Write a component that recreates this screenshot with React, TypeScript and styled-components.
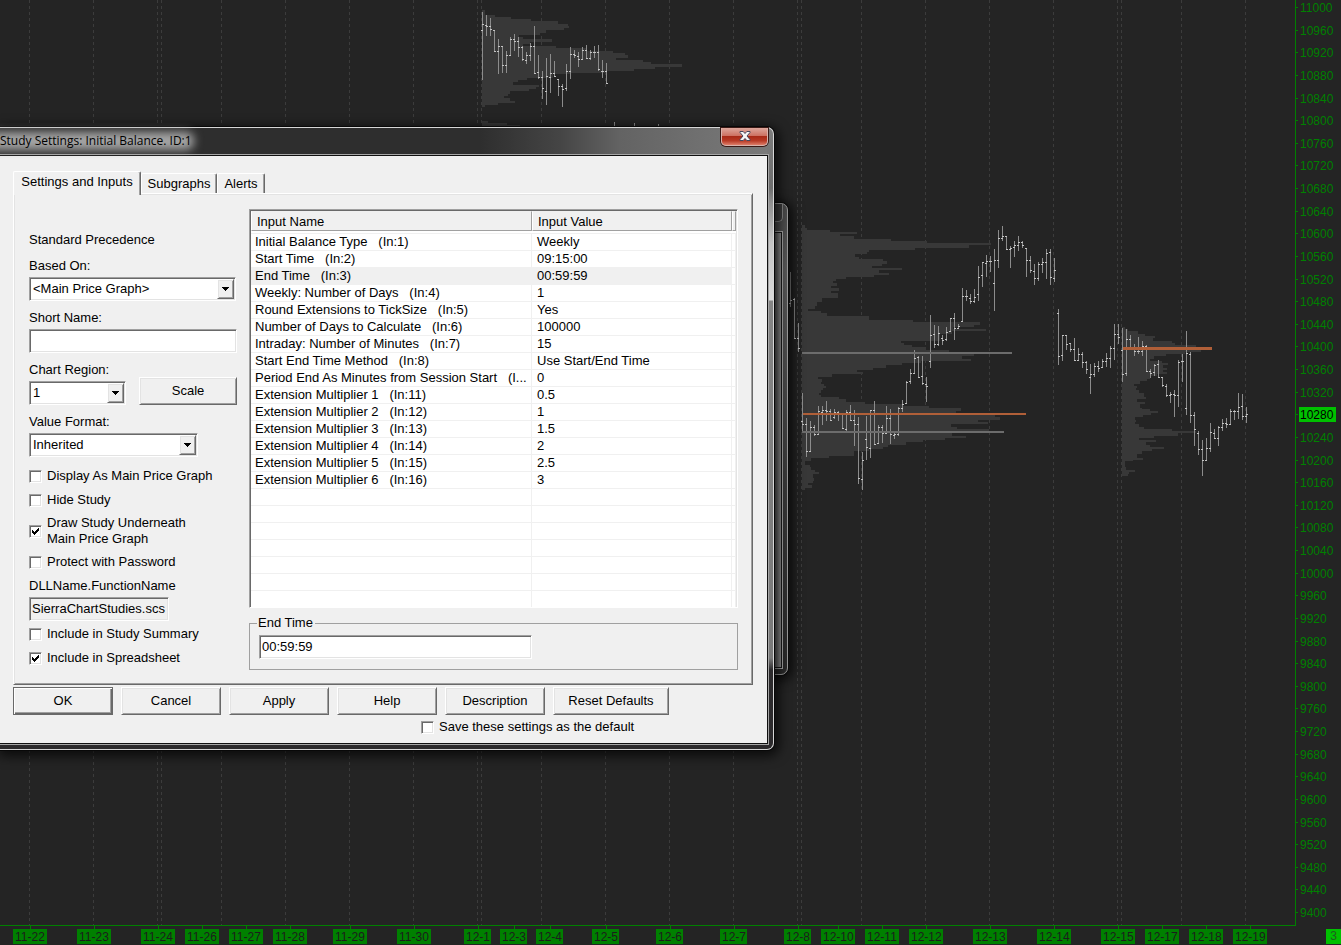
import React from "react";
import styled, { createGlobalStyle, css } from "styled-components";

/* ------------------------------------------------------------------ */
/* Chart data. Drawing data is stored at three units per screen pixel.  */
/* ------------------------------------------------------------------ */

const UNITS = 3;

type Bar = [x: number, high: number, low: number, open: number, close: number];
type Step = [y: number, extent: number];

interface BarGroup {
  originX: number;
  originY: number;
  bars: Bar[];
}

interface Profile {
  originX: number;
  originY: number;
  base: number;
  end: number;
  steps: Step[];
}

const barGroups: BarGroup[] = [
  {
    originX: 470,
    originY: 0,
    bars: [
      [37, 36, 240, 91, 73], [49, 45, 110, 76, 79], [61, 54, 110, 79, 88], [73, 90, 156, 91, 154],
      [85, 117, 222, 154, 139], [97, 138, 219, 139, 196], [109, 153, 219, 196, 166], [121, 111, 168, 166, 118],
      [133, 102, 153, 118, 124], [145, 111, 171, 124, 142], [157, 138, 183, 142, 178], [169, 156, 192, 181, 166],
      [181, 129, 183, 166, 139], [193, 78, 222, 139, 220], [205, 165, 237, 217, 232], [217, 213, 297, 232, 265],
      [229, 174, 315, 274, 229], [241, 162, 279, 232, 220], [253, 183, 231, 220, 229], [265, 237, 288, 238, 259],
      [277, 252, 321, 259, 268], [289, 192, 273, 265, 214], [301, 141, 237, 214, 163], [313, 150, 174, 163, 166],
      [325, 156, 201, 169, 178], [337, 141, 180, 178, 151], [349, 135, 178, 151, 175], [361, 150, 180, 175, 157],
      [373, 138, 174, 157, 157], [385, 135, 213, 157, 208], [397, 180, 234, 214, 214], [409, 189, 252, 214, 250],
      [433, 366, 390, 385, 385], [493, 369, 390, 385, 385], [565, 372, 390, 385, 385],
    ],
  },
  {
    originX: 780,
    originY: 210,
    bars: [
      [31, 186, 291, 280, 271], [43, 265, 387, 268, 385], [55, 339, 426, 385, 415], [67, 549, 663, 634, 643],
      [79, 624, 741, 643, 724], [91, 633, 726, 724, 652], [103, 645, 678, 652, 673], [115, 588, 675, 673, 604],
      [127, 588, 645, 607, 601], [139, 573, 633, 601, 604], [151, 597, 633, 604, 631], [163, 597, 627, 622, 607],
      [175, 603, 633, 607, 613], [187, 612, 657, 613, 655], [199, 600, 663, 658, 607], [211, 585, 633, 607, 631],
      [223, 600, 708, 631, 643], [235, 621, 822, 643, 805], [247, 726, 840, 808, 751], [259, 618, 750, 688, 712],
      [271, 600, 744, 715, 601], [283, 573, 705, 601, 703], [295, 645, 703, 700, 652], [307, 645, 699, 652, 670],
      [319, 588, 672, 670, 625], [331, 597, 702, 625, 673], [343, 663, 687, 676, 673], [355, 591, 678, 673, 595],
      [367, 570, 606, 595, 583], [379, 513, 582, 580, 517], [391, 477, 522, 514, 490], [403, 420, 492, 490, 445],
      [415, 438, 504, 442, 502], [427, 438, 525, 499, 520], [439, 501, 576, 523, 529], [451, 315, 474, 454, 376],
      [463, 345, 414, 373, 403], [475, 348, 408, 403, 370], [487, 375, 405, 385, 391], [499, 351, 394, 388, 367],
      [511, 324, 366, 364, 325], [523, 309, 390, 325, 355], [535, 342, 357, 355, 349], [547, 234, 336, 334, 259],
      [559, 240, 273, 259, 259], [571, 252, 282, 265, 274], [583, 237, 279, 274, 262], [595, 168, 273, 253, 202],
      [607, 156, 231, 196, 157], [619, 135, 201, 160, 154], [631, 138, 186, 154, 154], [643, 117, 303, 220, 151],
      [655, 60, 174, 151, 85], [667, 48, 93, 85, 80], [679, 78, 120, 80, 118], [691, 108, 174, 118, 115],
      [703, 93, 141, 112, 106], [715, 78, 123, 106, 97], [727, 93, 114, 97, 106], [739, 114, 201, 115, 151],
      [751, 138, 189, 151, 181], [763, 162, 225, 184, 205], [775, 156, 213, 205, 163],
    ],
  },
  {
    originX: 1040,
    originY: 220,
    bars: [
      [7, 114, 159, 133, 127], [19, 87, 177, 127, 100], [31, 87, 195, 97, 172], [43, 114, 186, 175, 151],
      [55, 267, 435, 280, 409], [67, 345, 423, 406, 346], [79, 345, 390, 346, 373], [91, 369, 396, 370, 388],
      [103, 354, 423, 388, 421], [115, 384, 423, 421, 403], [127, 396, 444, 403, 427], [139, 423, 462, 427, 448],
      [151, 432, 522, 472, 463], [163, 429, 471, 463, 439], [175, 423, 456, 439, 445], [187, 417, 444, 442, 424],
      [199, 399, 441, 424, 415], [211, 378, 444, 415, 385], [223, 312, 420, 385, 343], [235, 312, 372, 343, 352],
      [247, 324, 486, 391, 463], [259, 327, 468, 460, 358], [271, 345, 384, 358, 382], [283, 372, 408, 382, 394],
      [295, 351, 402, 394, 394], [307, 363, 408, 394, 379], [319, 375, 456, 379, 454], [331, 447, 474, 454, 460],
      [343, 432, 468, 457, 436], [355, 420, 474, 433, 472], [367, 471, 501, 472, 496], [379, 492, 531, 499, 526],
      [391, 516, 549, 526, 523], [403, 510, 591, 523, 526], [415, 420, 561, 526, 427], [427, 402, 486, 424, 424],
      [439, 333, 585, 565, 400], [451, 396, 609, 403, 586], [463, 576, 678, 586, 628], [475, 633, 705, 640, 688],
      [487, 660, 768, 688, 721], [499, 654, 723, 721, 685], [511, 609, 696, 685, 637], [523, 627, 657, 640, 655],
      [535, 618, 678, 655, 622], [547, 597, 633, 622, 610], [559, 594, 624, 610, 613], [571, 567, 615, 613, 574],
      [583, 570, 600, 574, 574], [595, 519, 597, 574, 562], [607, 522, 600, 559, 589], [619, 561, 609, 589, 583],
    ],
  },
];

const profiles: Profile[] = [
  {
    originX: 470, originY: 0, base: 36, end: 321,
    steps: [
      [30, 45], [45, 75], [51, 123], [57, 183], [63, 264], [72, 294], [78, 297], [84, 282], [90, 228], [99, 210],
      [105, 147], [111, 160], [117, 246], [126, 180], [132, 160], [138, 258], [144, 350], [153, 429], [159, 465],
      [165, 474], [174, 438], [180, 519], [186, 543], [192, 636], [201, 555], [207, 492], [213, 405], [219, 300],
      [222, 250], [234, 171], [240, 144], [246, 129], [255, 207], [261, 198], [267, 177], [273, 120], [282, 114],
      [288, 102], [294, 120], [303, 135], [309, 84], [315, 45],
    ],
  },
  { originX: 470, originY: 0, base: 36, end: 390, steps: [[363, 54], [369, 111], [375, 150]] },
  {
    originX: 780, originY: 210, base: 66, end: 840,
    steps: [
      [45, 75], [54, 81], [60, 150], [66, 231], [72, 180], [78, 222], [87, 333], [93, 441], [99, 633], [105, 567],
      [114, 405], [120, 267], [126, 261], [132, 225], [141, 237], [147, 309], [153, 321], [162, 306], [168, 276],
      [174, 366], [180, 297], [189, 327], [195, 282], [201, 198], [207, 168], [213, 159], [219, 171], [228, 153],
      [234, 177], [243, 153], [249, 174], [264, 126], [276, 111], [288, 105], [297, 84], [303, 123], [309, 141],
      [318, 267], [330, 399], [336, 600], [345, 582], [351, 520], [357, 618], [363, 516], [372, 480], [393, 363],
      [399, 372], [405, 396], [411, 440], [420, 507], [432, 582], [438, 546], [447, 573], [453, 423], [459, 366],
      [465, 318], [474, 279], [480, 231], [486, 249], [492, 156], [501, 114], [507, 126], [516, 123], [522, 132],
      [528, 138], [534, 129], [540, 123], [549, 117], [555, 123], [561, 177], [567, 198], [576, 255], [582, 366],
      [588, 447], [594, 543], [603, 528], [609, 600], [615, 645], [621, 660], [630, 594], [636, 624], [642, 513],
      [651, 531], [657, 628], [669, 516], [678, 558], [684, 495], [690, 429], [696, 378], [705, 324], [711, 309],
      [717, 267], [723, 222], [738, 147], [744, 93], [753, 75], [765, 90], [771, 93], [780, 105], [786, 117],
      [792, 99], [804, 102], [813, 99], [819, 84], [825, 96], [834, 75],
    ],
  },
  {
    originX: 1040, originY: 220, base: 246, end: 768,
    steps: [
      [321, 255], [327, 264], [333, 294], [342, 315], [348, 345], [354, 339], [363, 396], [369, 405], [375, 468],
      [381, 510], [390, 483], [396, 435], [402, 378], [408, 342], [417, 330], [423, 366], [429, 384], [435, 369],
      [444, 381], [450, 369], [456, 381], [462, 351], [468, 330], [477, 321], [483, 300], [492, 282], [498, 291],
      [504, 288], [510, 297], [519, 312], [531, 318], [537, 291], [546, 315], [552, 300], [564, 306], [567, 330],
      [573, 354], [579, 333], [585, 309], [591, 285], [600, 288], [606, 285], [612, 297], [621, 312], [627, 396],
      [633, 468], [639, 414], [648, 342], [654, 297], [660, 348], [666, 318], [675, 330], [681, 372], [687, 336],
      [693, 306], [702, 291], [714, 309], [720, 279], [723, 255], [741, 258], [750, 285], [756, 267], [762, 264],
    ],
  },
];

const gridXs = [
  29, 93, 157, 161, 221, 285, 349, 413, 477, 481, 541, 605, 669, 733, 797, 801, 861, 925, 989, 1053, 1117, 1121, 1181,
  1245,
];

const dates: [string, number][] = [
  ["11-22", 30], ["11-23", 94], ["11-24", 158], ["11-26", 202], ["11-27", 246], ["11-28", 290], ["11-29", 350],
  ["11-30", 414], ["12-1", 478], ["12-3", 514], ["12-4", 550], ["12-5", 606], ["12-6", 670], ["12-7", 734],
  ["12-8", 798], ["12-10", 838], ["12-11", 882], ["12-12", 926], ["12-13", 990], ["12-14", 1054], ["12-15", 1118],
  ["12-17", 1162], ["12-18", 1206], ["12-19", 1250],
];

const prices = Array.from({ length: 41 }, (_, i) => 11000 - i * 40);
const priceY = (price: number) => Math.round(7 + ((11000 - price) / 1600) * 905);

const toPx = (v: number) => Math.floor(v / UNITS);

const stemPath = barGroups
  .map((g) =>
    g.bars
      .map(([x, high, low]) => {
        const px = g.originX + toPx(x);
        return `M${px} ${g.originY + toPx(high)}h1V${g.originY + toPx(low)}h-1z`;
      })
      .join("")
  )
  .join("");

const tickPath = barGroups
  .map((g) =>
    g.bars
      .map(([x, , , open, close]) => {
        const px = g.originX + toPx(x);
        return `M${px - 1} ${g.originY + toPx(open)}h2v1h-2zM${px} ${g.originY + toPx(close)}h2v1h-2z`;
      })
      .join("")
  )
  .join("");

const profilePath = (p: Profile) => {
  const left = p.originX + toPx(p.base);
  const start = `M${left} ${p.originY + toPx(p.steps[0][0])}`;
  const body = p.steps
    .map(([, extent], i) => {
      const next = i + 1 < p.steps.length ? p.steps[i + 1][0] : p.end;
      return `H${p.originX + toPx(extent)}V${p.originY + toPx(next)}`;
    })
    .join("");
  return `${start}${body}H${left}z`;
};

/* ------------------------------------------------------------------ */
/* Chart                                                               */
/* ------------------------------------------------------------------ */

const GlobalStyle = createGlobalStyle`
  *, *::before, *::after { box-sizing: border-box; }
  body {
    margin: 0;
    background: #242424;
    font-family: "Liberation Sans", Arial, sans-serif;
    font-size: 13px;
    line-height: 16px;
    color: #000;
  }
`;

const Workspace = styled.main`
  position: relative;
  display: flex;
  flex-direction: column;
  min-height: 100vh;
  overflow: hidden;
  background: #242424;
`;

const ChartRow = styled.div`
  flex: 1;
  display: flex;
  min-height: 925px;
`;

const Plot = styled.svg`
  flex: 1;
  min-width: 0;
  display: block;
`;

const PriceScale = styled.svg`
  flex: none;
  width: 46px;
  display: block;
  border-left: 1px solid #008000;
`;

const TimeRow = styled.div`
  display: flex;
  justify-content: space-between;
  align-items: flex-end;
  height: 20px;
`;

const TimeScale = styled.svg`
  flex: 1;
  min-width: 0;
  height: 20px;
  display: block;
`;

const AxisText = styled.text<{ $color?: string }>`
  font-family: "Liberation Sans", Arial, sans-serif;
  font-size: 12px;
  fill: ${(p) => p.$color ?? "#008000"};
`;

const ChartNumber = styled.span`
  width: 15px;
  height: 15px;
  margin-bottom: 1px;
  background: #00c000;
  color: #1f5c1f;
  font-size: 12px;
  line-height: 15px;
  text-align: center;
`;

function Chart() {
  return (
    <>
      <ChartRow>
        <Plot role="img" aria-label="Price chart with weekly volume profiles">
          {gridXs.map((x) => (
            <line key={x} x1={x + 0.5} x2={x + 0.5} y1={0} y2={925} stroke="#3c3c3c" strokeDasharray="3 3" />
          ))}
          {profiles.map((p, i) => (
            <path key={i} d={profilePath(p)} fill="#383838" />
          ))}
          <path d={stemPath} fill="#8c8c8c" />
          <path d={tickPath} fill="#c4c4c4" />
          <rect x={802} y={352} width={210} height={2} fill="#6c6c6c" />
          <rect x={802} y={431} width={202} height={2} fill="#6c6c6c" />
          <rect x={803} y={413} width={223} height={2} fill="#b05f38" />
          <rect x={1123} y={347} width={89} height={3} fill="#b05f38" />
        </Plot>
        <PriceScale role="img" aria-label="Price scale">
          {prices.map((price) => {
            const y = priceY(price);
            const current = price === 10280;
            return (
              <g key={price}>
                <rect x={0} y={y} width={2} height={1} fill="#008000" />
                {current && <rect x={3} y={y - 7} width={37} height={15} fill="#00c000" />}
                <AxisText x={4} y={y + 5} $color={current ? "#000" : undefined}>
                  {price}
                </AxisText>
              </g>
            );
          })}
        </PriceScale>
      </ChartRow>
      <TimeRow>
        <TimeScale role="img" aria-label="Time scale">
          <rect x={0} y={0} width={1296} height={1} fill="#008000" />
          {dates.map(([label, x]) => {
            const w = label.length === 5 ? 34 : 27;
            const left = x - Math.round(w / 2);
            return (
              <g key={label}>
                <rect x={x} y={0} width={1} height={4} fill="#008000" />
                <rect x={left} y={4} width={w} height={15} fill="#008000" />
                <AxisText x={left + 2} y={16} $color="#1c1c1c">
                  {label}
                </AxisText>
              </g>
            );
          })}
        </TimeScale>
        <ChartNumber>3</ChartNumber>
      </TimeRow>
    </>
  );
}

/* ------------------------------------------------------------------ */
/* Dialog parts                                                        */
/* ------------------------------------------------------------------ */

const sunken = css`
  border: 1px solid;
  border-color: #a0a0a0 #fff #fff #a0a0a0;
  box-shadow: inset 1px 1px 0 #696969, inset -1px -1px 0 #e3e3e3;
`;

const raised = css`
  border: 1px solid;
  border-color: #fff #696969 #696969 #fff;
  box-shadow: inset 1px 1px 0 #e3e3e3, inset -1px -1px 0 #a0a0a0;
`;

const RearWindow = styled.div`
  position: absolute;
  left: 600px;
  top: 203px;
  width: 188px;
  height: 472px;
  padding: 27px 4px 5px;
  border: 1px solid #9c9c9c;
  border-radius: 0 7px 7px 0;
  background: linear-gradient(#4a4a4a, #5a5a5a 14%, #3a3a3a 60%, #2a2a2a);
  box-shadow: 0 0 0 1px #0c0c0c, 2px 2px 12px 3px rgba(0, 0, 0, 0.7);
`;

const RearCaption = styled.div`
  position: absolute;
  right: 4px;
  top: 0;
  width: 60px;
  height: 18px;
  border: 1px solid #888;
  border-top: 0;
  border-radius: 0 0 5px 5px;
  background: #3c3c3c;
`;

const RearClient = styled.div`
  height: 100%;
  border: 1px solid #a8a8a8;
  outline: 1px solid #1a1a1a;
  outline-offset: -2px;
  background: linear-gradient(90deg, #5c5c5c 168px, #9c9c9c 176px);
`;

const Dialog = styled.section`
  position: absolute;
  left: 0;
  top: 127px;
  width: 774px;
  padding: 0 5px 5px 0;
  border: 1px solid #d6d6d6;
  border-left: 0;
  border-radius: 0 7px 7px 0;
  background:
    linear-gradient(#7c7c7c, #6e6e6e 60px, #909090 75px, #c4c4c4 115px, #dadada 172px, #858585 173px, #7a7a7a 530px, #2c2a2c 542px)
      right / 6px 100% no-repeat,
    linear-gradient(90deg, #2e2e2e, #2e2e2e 480px, #454545 560px, #636363 620px, #707070 700px, #7a7a7a) top / 100% 40px
      no-repeat,
    #2c2a2c;
  box-shadow: 0 0 0 1px #080808, 2px 3px 12px 3px rgba(0, 0, 0, 0.7);
`;

const TitleBar = styled.header`
  display: flex;
  justify-content: space-between;
  align-items: flex-start;
  height: 27px;
`;

const Title = styled.h1`
  position: relative;
  margin: 0;
  padding-top: 4px;
  font-family: "Open Sans", "Segoe UI", sans-serif;
  font-size: 12px;
  font-weight: 400;
  line-height: 18px;
  white-space: nowrap;
  isolation: isolate;

  &::before {
    content: "";
    position: absolute;
    z-index: -1;
    inset: 4px -2px 0 -12px;
    border-radius: 8px;
    background: #a6a6a6;
    filter: blur(5px);
  }
`;

const CloseButton = styled.button`
  display: flex;
  align-items: center;
  justify-content: center;
  width: 47px;
  height: 18px;
  padding: 0 0 1px;
  border: 1px solid #d9b3ac;
  border-top: 0;
  border-radius: 0 0 5px 5px;
  background: linear-gradient(#dea79c, #cd7263 45%, #a82a17 50%, #b83a26 75%, #dd7d68);
  box-shadow: 0 0 0 1px #3a1a16;
`;

const Client = styled.div`
  padding: 15px 14px 7px 13px;
  border: 1px solid #101010;
  border-left: 0;
  background: #f0f0f0;
  box-shadow: 0 0 0 1px #a6a6a6;
`;

const Tabs = styled.div`
  position: relative;
  display: flex;
  align-items: flex-end;
  height: 22px;
`;

const Tab = styled.button<{ $active?: boolean; $w: number }>`
  width: ${(p) => p.$w}px;
  height: ${(p) => (p.$active ? 24 : 20)}px;
  margin-bottom: ${(p) => (p.$active ? -2 : 0)}px;
  padding: 0 0 ${(p) => (p.$active ? 3 : 0)}px;
  border: 1px solid;
  border-color: #fff #696969 transparent #fff;
  border-bottom: 0;
  border-radius: 2px 2px 0 0;
  background: #f0f0f0;
  box-shadow: inset -1px 0 0 #a0a0a0;
  font: inherit;
  color: #000;
  white-space: nowrap;
  text-align: center;
`;

const Panel = styled.div`
  display: grid;
  grid-template-columns: 208px 1fr;
  gap: 13px;
  padding: 15px 14px 14px;
  border: 1px solid;
  border-color: #fff #696969 #696969 #fff;
  box-shadow: inset 1px 1px 0 #e3e3e3, inset -1px -1px 0 #a0a0a0;
`;

const Options = styled.div`
  display: flex;
  flex-direction: column;
  align-items: flex-start;
  padding: 22px 0 0 1px;
  line-height: 18px;
`;

const Caption = styled.p`
  margin: 0 0 8px;
`;

const Field = styled.div`
  display: flex;
  flex-direction: column;
  gap: 2px;
  margin-bottom: 8px;
`;

const FieldRow = styled.div`
  display: flex;
  align-items: flex-end;
  gap: 13px;
  margin-bottom: 8px;

  ${Field} {
    margin-bottom: 0;
  }
`;

const CheckGroup = styled.div`
  display: flex;
  flex-direction: column;
  gap: 6px;
  padding-top: 2px;

  ${Field} {
    margin-bottom: -2px;
  }
`;

const TextBox = styled.input<{ $w: number; $flat?: boolean }>`
  width: ${(p) => p.$w}px;
  height: 24px;
  padding: 0 2px 1px;
  ${sunken}
  border-radius: 0;
  background: ${(p) => (p.$flat ? "#f0f0f0" : "#fff")};
  font: inherit;
  color: #000;
  outline: 0;
`;

const SelectFrame = styled.div<{ $w: number }>`
  display: grid;
  width: ${(p) => p.$w}px;
  height: 24px;
  padding: 1px;
  ${sunken}
  background: #fff;
`;

const NativeSelect = styled.select`
  grid-area: 1 / 1;
  appearance: none;
  padding: 0 18px 0 2px;
  border: 0;
  background: transparent;
  font: inherit;
  color: #000;
  outline: 0;
`;

const SelectArrow = styled.span`
  grid-area: 1 / 1;
  justify-self: end;
  display: flex;
  align-items: center;
  justify-content: center;
  width: 17px;
  ${raised}
  background: #f0f0f0;
  pointer-events: none;
`;

const CheckLabel = styled.label`
  display: flex;
  align-items: center;
  gap: 5px;
  min-height: 18px;
  line-height: 16px;
`;

const CheckBoxFrame = styled.span`
  display: grid;
  flex: none;
  width: 13px;
  height: 13px;
`;

const NativeCheck = styled.input`
  grid-area: 1 / 1;
  appearance: none;
  width: 13px;
  height: 13px;
  margin: 0;
  ${sunken}
  background: #fff;
`;

const Tick = styled.svg`
  grid-area: 1 / 1;
  width: 13px;
  height: 13px;
  visibility: hidden;
  pointer-events: none;

  ${NativeCheck}:checked + & {
    visibility: visible;
  }
`;

const PushButton = styled.button<{ $w?: number; $default?: boolean }>`
  width: ${(p) => p.$w ?? 100}px;
  height: 28px;
  padding: 0 0 1px;
  ${raised}
  ${(p) =>
    p.$default &&
    css`
      border-color: #696969;
      box-shadow: inset 1px 1px 0 #fff, inset -1px -1px 0 #696969, inset -2px -2px 0 #a0a0a0;
    `}
  background: #f0f0f0;
  font: inherit;
  line-height: 16px;
  color: #000;
`;

const Inputs = styled.div`
  display: flex;
  flex-direction: column;
  gap: 7px;
  min-width: 0;
`;

const ListView = styled.div`
  height: 399px;
  padding: 1px;
  ${sunken}
  background: #fff;
  overflow: hidden;
`;

const ListTable = styled.table`
  width: 100%;
  table-layout: fixed;
  border-collapse: separate;
  border-spacing: 0;
`;

const HeadCell = styled.th`
  height: 19px;
  padding: 2px 0 0 5px;
  border: 1px solid;
  border-color: #f0f0f0 #a0a0a0 #a0a0a0 #fff;
  background: #f0f0f0;
  font-weight: 400;
  line-height: 16px;
  text-align: left;
`;

const Spacer = styled.td`
  height: 3px;
  padding: 0;
  border-bottom: 1px solid #f0f0f0;
`;

const Cell = styled.td<{ $selected?: boolean }>`
  height: 17px;
  padding: 0 4px;
  border-right: 1px solid #f0f0f0;
  border-bottom: 1px solid #f0f0f0;
  background: ${(p) => (p.$selected ? "#f0f0f0" : "#fff")};
  overflow: hidden;
  white-space: pre;

  & + & {
    padding-left: 5px;
  }
`;

const Group = styled.fieldset`
  min-width: 0;
  height: 55px;
  margin: 0;
  padding: 4px 9px 0;
  border: 1px solid #a0a0a0;
`;

const Legend = styled.legend`
  margin: 0 0 0 -2px;
  padding: 0 2px 0 1px;
`;

const Actions = styled.div`
  display: flex;
  gap: 8px;
  padding-top: 2px;
`;

const SaveDefault = styled.div`
  display: flex;
  padding: 3px 0 0 408px;
`;

/* ------------------------------------------------------------------ */
/* Dialog                                                              */
/* ------------------------------------------------------------------ */

const rows: [string, string][] = [
  ["Initial Balance Type   (In:1)", "Weekly"],
  ["Start Time   (In:2)", "09:15:00"],
  ["End Time   (In:3)", "00:59:59"],
  ["Weekly: Number of Days   (In:4)", "1"],
  ["Round Extensions to TickSize   (In:5)", "Yes"],
  ["Number of Days to Calculate   (In:6)", "100000"],
  ["Intraday: Number of Minutes   (In:7)", "15"],
  ["Start End Time Method   (In:8)", "Use Start/End Time"],
  ["Period End As Minutes from Session Start   (I...", "0"],
  ["Extension Multiplier 1   (In:11)", "0.5"],
  ["Extension Multiplier 2   (In:12)", "1"],
  ["Extension Multiplier 3   (In:13)", "1.5"],
  ["Extension Multiplier 4   (In:14)", "2"],
  ["Extension Multiplier 5   (In:15)", "2.5"],
  ["Extension Multiplier 6   (In:16)", "3"],
];

const EMPTY_ROWS = 7;

function Select({ id, width, value }: { id: string; width: number; value: string }) {
  return (
    <SelectFrame $w={width}>
      <NativeSelect id={id} defaultValue={value}>
        <option value={value}>{value}</option>
      </NativeSelect>
      <SelectArrow aria-hidden="true">
        <svg width="7" height="4" viewBox="0 0 7 4">
          <path d="M0 0h7v1h-1v1h-1v1h-1v1h-1v-1h-1v-1h-1v-1h-1z" fill="#000" />
        </svg>
      </SelectArrow>
    </SelectFrame>
  );
}

function Check({ checked = false, children }: { checked?: boolean; children: React.ReactNode }) {
  return (
    <CheckLabel>
      <CheckBoxFrame>
        <NativeCheck type="checkbox" defaultChecked={checked} />
        <Tick viewBox="0 0 13 13" aria-hidden="true">
          <path d="M3 5v3h1v1h1v1h1v-1h1v-1h1v-1h1v-1h1v-3h-1v1h-1v1h-1v1h-1v1h-1v-1h-1v-1z" fill="#000" />
        </Tick>
      </CheckBoxFrame>
      <span>{children}</span>
    </CheckLabel>
  );
}

function StudyDialog() {
  return (
    <Dialog role="dialog" aria-labelledby="dialog-title">
      <TitleBar>
        <Title id="dialog-title">Study Settings: Initial Balance. ID:1</Title>
        <CloseButton type="button" aria-label="Close">
          <svg width="12" height="10" viewBox="0 0 12 10">
            <path
              d="M1 .5h3.2L6 2.5 7.8.5H11v1L8 5l3 3.5v1H7.8L6 7.500 4.200 9.500H1v-1L4 5 1 1.500z"
              fill="#f6f6f6"
              stroke="#47475c"
              strokeWidth="1"
            />
          </svg>
        </CloseButton>
      </TitleBar>
      <Client>
        <Tabs role="tablist">
          <Tab type="button" role="tab" aria-selected="true" $active $w={128}>
            Settings and Inputs
          </Tab>
          <Tab type="button" role="tab" aria-selected="false" $w={76}>
            Subgraphs
          </Tab>
          <Tab type="button" role="tab" aria-selected="false" $w={48}>
            Alerts
          </Tab>
        </Tabs>
        <Panel role="tabpanel">
          <Options>
            <Caption>Standard Precedence</Caption>
            <Field>
              <label htmlFor="based-on">Based On:</label>
              <Select id="based-on" width={207} value="<Main Price Graph>" />
            </Field>
            <Field>
              <label htmlFor="short-name">Short Name:</label>
              <TextBox id="short-name" type="text" $w={208} />
            </Field>
            <FieldRow>
              <Field>
                <label htmlFor="region">Chart Region:</label>
                <Select id="region" width={97} value="1" />
              </Field>
              <PushButton type="button" $w={98}>
                Scale
              </PushButton>
            </FieldRow>
            <Field>
              <label htmlFor="format">Value Format:</label>
              <Select id="format" width={169} value="Inherited" />
            </Field>
            <CheckGroup>
              <Check>Display As Main Price Graph</Check>
              <Check>Hide Study</Check>
              <Check checked>
                Draw Study Underneath
                <br />
                Main Price Graph
              </Check>
              <Check>Protect with Password</Check>
              <Field>
                <label htmlFor="dll">DLLName.FunctionName</label>
                <TextBox id="dll" type="text" $w={140} $flat readOnly value="SierraChartStudies.scs" />
              </Field>
              <Check>Include in Study Summary</Check>
              <Check checked>Include in Spreadsheet</Check>
            </CheckGroup>
          </Options>
          <Inputs>
            <ListView>
              <ListTable>
                <colgroup>
                  <col style={{ width: 281 }} />
                  <col style={{ width: 200 }} />
                  <col />
                </colgroup>
                <thead>
                  <tr>
                    <HeadCell scope="col">Input Name</HeadCell>
                    <HeadCell scope="col">Input Value</HeadCell>
                    <HeadCell as="td" />
                  </tr>
                </thead>
                <tbody>
                  <tr>
                    <Spacer colSpan={3} />
                  </tr>
                  {rows.map(([name, value], i) => (
                    <tr key={name}>
                      <Cell $selected={i === 2}>{name}</Cell>
                      <Cell $selected={i === 2}>{value}</Cell>
                      <Cell />
                    </tr>
                  ))}
                  {Array.from({ length: EMPTY_ROWS }, (_, i) => (
                    <tr key={`empty-${i}`}>
                      <Cell />
                      <Cell />
                      <Cell />
                    </tr>
                  ))}
                </tbody>
              </ListTable>
            </ListView>
            <Group>
              <Legend>End Time</Legend>
              <TextBox type="text" aria-label="End Time" $w={273} defaultValue="00:59:59" />
            </Group>
          </Inputs>
        </Panel>
        <Actions>
          <PushButton type="button" $default>
            OK
          </PushButton>
          <PushButton type="button">Cancel</PushButton>
          <PushButton type="button">Apply</PushButton>
          <PushButton type="button">Help</PushButton>
          <PushButton type="button">Description</PushButton>
          <PushButton type="button" $w={116}>
            Reset Defaults
          </PushButton>
        </Actions>
        <SaveDefault>
          <Check>Save these settings as the default</Check>
        </SaveDefault>
      </Client>
    </Dialog>
  );
}

export default function App() {
  return (
    <Workspace>
      <GlobalStyle />
      <Chart />
      <RearWindow aria-hidden="true">
        <RearCaption />
        <RearClient />
      </RearWindow>
      <StudyDialog />
    </Workspace>
  );
}
